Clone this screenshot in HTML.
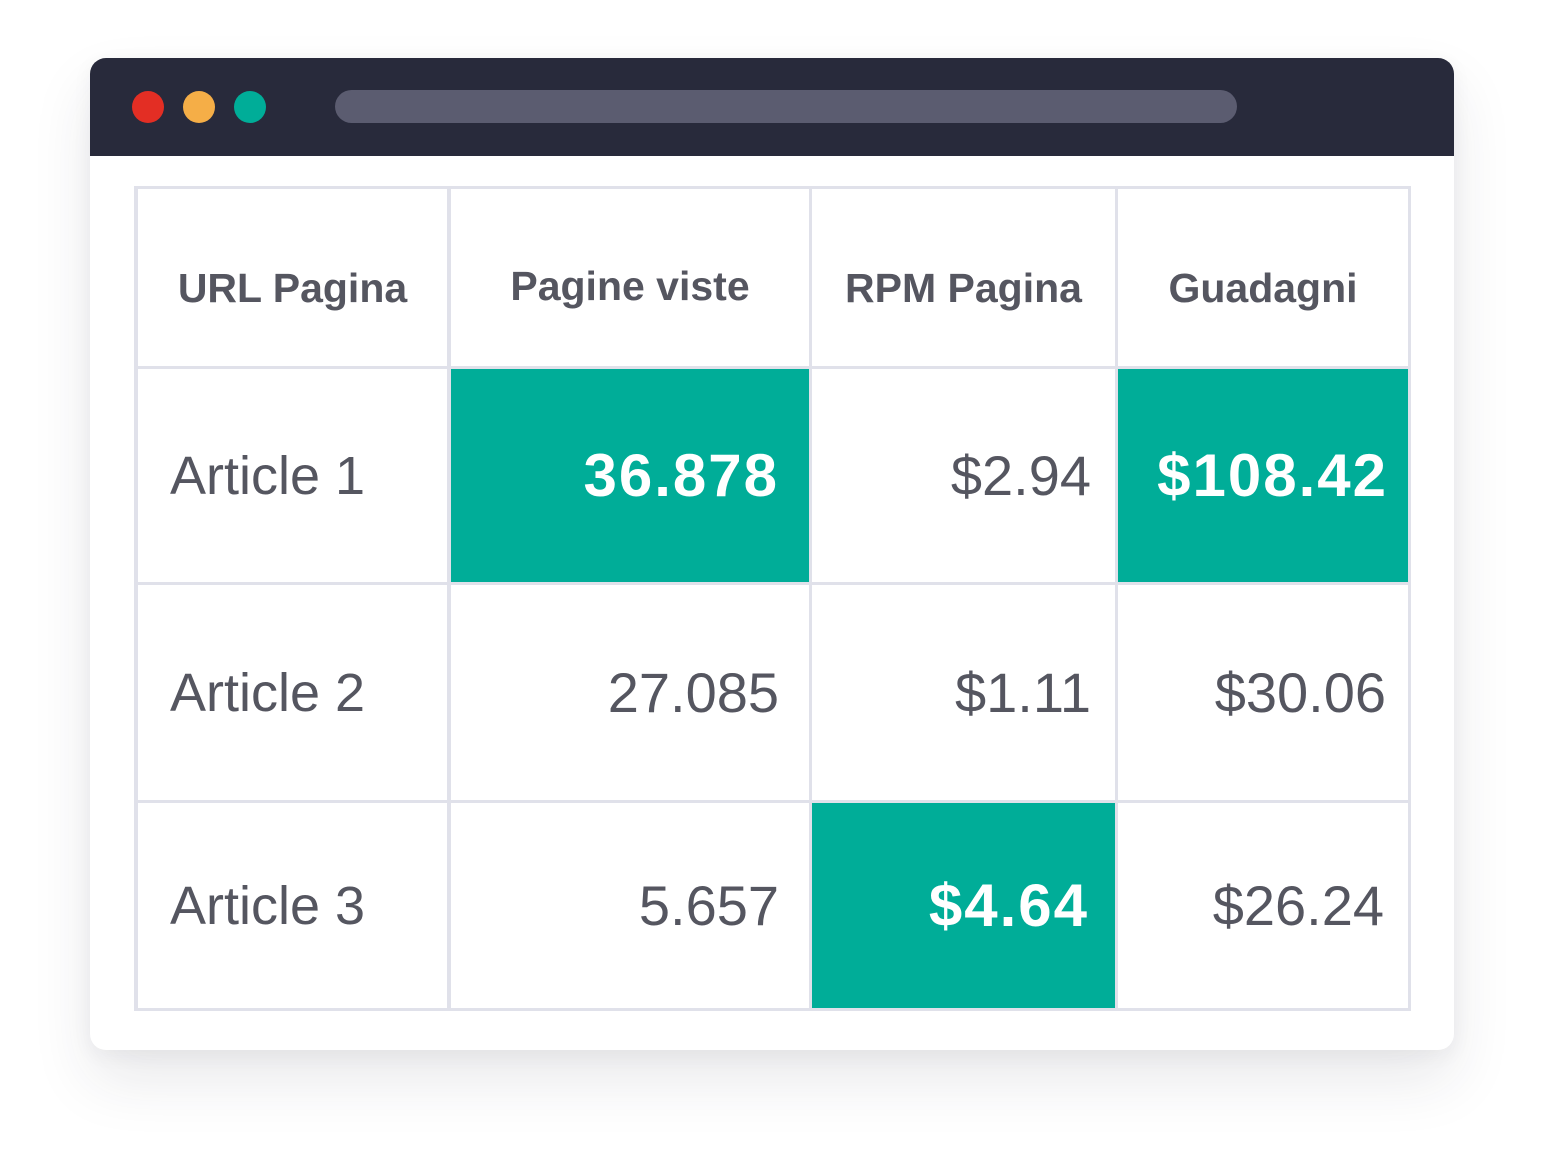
<!DOCTYPE html>
<html><head><meta charset="utf-8"><style>
html,body{margin:0;padding:0;background:#fff;width:1544px;height:1172px;overflow:hidden;font-family:"Liberation Sans",sans-serif;}
.win{position:absolute;left:90px;top:58px;width:1364px;height:992px;border-radius:16px;background:#fff;box-shadow:0 30px 60px rgba(40,42,60,0.10),0 5px 20px rgba(40,42,60,0.05);overflow:hidden;}
.bar{position:absolute;left:0;top:0;width:1364px;height:98px;background:#282a3b;}
.dot{position:absolute;top:33px;width:32px;height:32px;border-radius:50%;}
.addr{position:absolute;left:245px;top:32px;width:902px;height:33px;border-radius:17px;background:#5b5c70;}
.grid{position:absolute;left:134px;top:186px;width:1277px;height:825px;background:#e0e1ea;}
.c{position:absolute;background:#fff;display:flex;align-items:center;color:#555660;box-sizing:border-box;}
.h{justify-content:center;font-weight:bold;font-size:41px;padding-top:22px;}
.l{padding-left:32px;font-size:54px;}
.r{justify-content:flex-end;padding-right:30px;font-size:56px;}
.g{background:#00ad98;color:#fff;font-weight:bold;font-size:60px;letter-spacing:2px;}
</style></head><body>
<div class="win">
<div class="bar">
<div class="dot" style="left:42px;background:#e32e24"></div>
<div class="dot" style="left:93px;background:#f5ae47"></div>
<div class="dot" style="left:144px;background:#00ad98"></div>
<div class="addr"></div>
</div>
</div>
<div class="grid"></div>
<div class="c h" style="left:138px;top:189px;width:309px;height:177px;">URL Pagina</div>
<div class="c h" style="left:451px;top:189px;width:358px;height:177px;padding-top:18px">Pagine viste</div>
<div class="c h" style="left:812px;top:189px;width:303px;height:177px;">RPM Pagina</div>
<div class="c h" style="left:1118px;top:189px;width:290px;height:177px;">Guadagni</div>
<div class="c l" style="left:138px;top:369px;width:309px;height:213px;">Article 1</div>
<div class="c r g" style="left:451px;top:369px;width:358px;height:213px;">36.878</div>
<div class="c r" style="left:812px;top:369px;width:303px;height:213px;padding-right:24px">$2.94</div>
<div class="c r g" style="left:1118px;top:369px;width:290px;height:213px;padding-right:20px">$108.42</div>
<div class="c l" style="left:138px;top:585px;width:309px;height:215px;">Article 2</div>
<div class="c r" style="left:451px;top:585px;width:358px;height:215px;">27.085</div>
<div class="c r" style="left:812px;top:585px;width:303px;height:215px;padding-right:24px">$1.11</div>
<div class="c r" style="left:1118px;top:585px;width:290px;height:215px;padding-right:22px">$30.06</div>
<div class="c l" style="left:138px;top:803px;width:309px;height:205px;">Article 3</div>
<div class="c r" style="left:451px;top:803px;width:358px;height:205px;">5.657</div>
<div class="c r g" style="left:812px;top:803px;width:303px;height:205px;padding-right:26px">$4.64</div>
<div class="c r" style="left:1118px;top:803px;width:290px;height:205px;padding-right:24px">$26.24</div>
</body></html>
